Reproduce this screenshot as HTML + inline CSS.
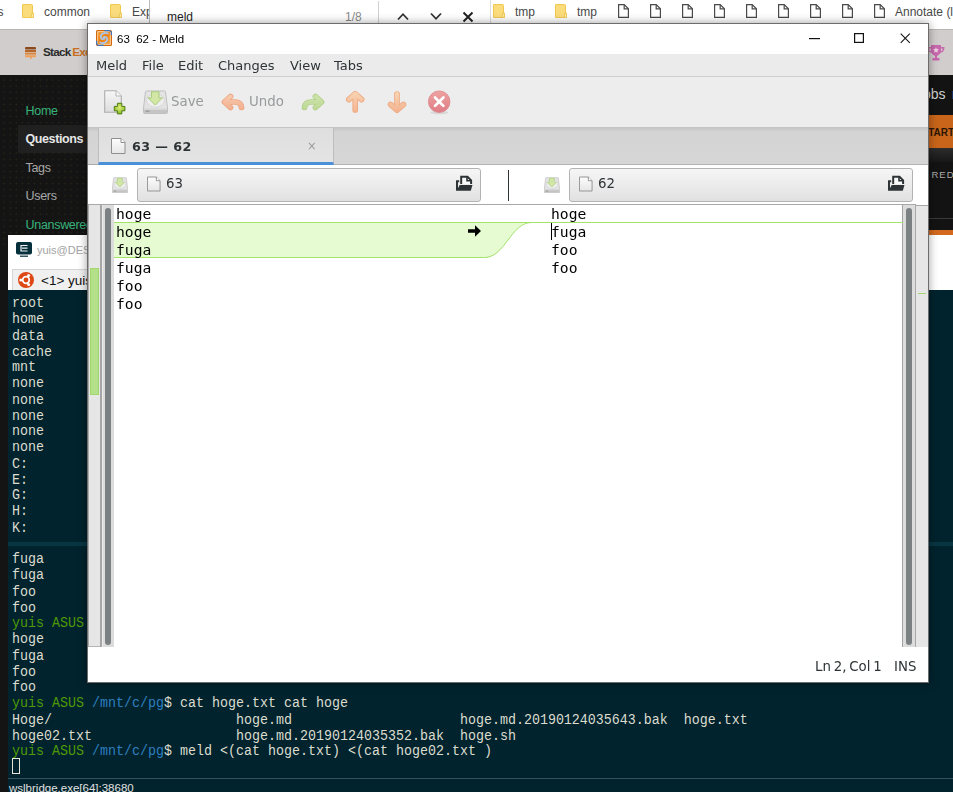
<!DOCTYPE html>
<html><head><meta charset="utf-8"><title>63 62 - Meld</title>
<style>
*{box-sizing:border-box;margin:0;padding:0}
html,body{width:953px;height:792px;overflow:hidden;background:#141414}
body{position:relative;font-family:"Liberation Sans",sans-serif}
.abs{position:absolute}
/* ---------- browser background ---------- */
#bm{left:0;top:0;width:953px;height:30px;background:#fff;border-bottom:1px solid #b9b6b5}
#bm span{position:absolute;top:5px;font:12px/14px "Liberation Sans",sans-serif;color:#484848;white-space:nowrap}
#sehead{left:0;top:30px;width:953px;height:45px;background:#d1cdcc}
#find{left:149px;top:0;width:342px;height:26px;background:#fff;border-left:1px solid #bbb;border-right:1px solid #ddd}
#side{left:0;top:75px;width:100px;height:170px;background:#141414 radial-gradient(circle,#2c2819 0,#2c2819 .6px,transparent 1px) 1px 2px/6.100px 6.100px}
#side div{position:absolute;left:25.500px;font:12.500px/16px "Liberation Sans",sans-serif;white-space:nowrap;letter-spacing:-.3px}
#rside{left:920px;top:75px;width:33px;height:220px;background:#131313}
/* ---------- terminal ---------- */
#term{left:8px;top:235px;width:945px;height:557px;background:#00232d}
#term pre{position:absolute;left:4px;top:61px;font:13.33px/14.25px "Liberation Mono","DejaVu Sans Mono",monospace;color:#dcdccf;white-space:pre;transform:scaleY(1.122807);transform-origin:0 0}
#term .g{color:#4e9a06}
#term .b{color:#2f7fc0}
/* ---------- meld ---------- */
#meld{left:87px;top:23px;width:842px;height:660px;background:#fff;box-shadow:0 0 9px rgba(0,0,0,.38);font-family:"DejaVu Sans","Liberation Sans",sans-serif}
#meld .t{position:absolute;white-space:nowrap}
#meld .mn{top:35px;font:13px/16px "DejaVu Sans",sans-serif;color:#2e3436}
#meld .tb{top:71px;font:13.33px/16px "DejaVu Sans",sans-serif;color:#979a9b}
#meld .fb{border:1px solid #b3b3b3;border-radius:3px;background:linear-gradient(#f6f6f6,#e1e1e1)}
#meld .code{font:14.67px/18px "DejaVu Sans Mono","Liberation Mono",monospace;color:#000;white-space:pre}
</style></head><body>

<!-- browser -->
<div id="bm" class="abs">
  <span style="left:-2.500px">s</span>
<svg class="abs" style="left:22px;top:4px" width="12" height="14" viewBox="0 0 12 14"><path d="M1 0.5h8.5a1 1 0 0 1 1 1V9h1v4.5H1a0.5 .5 0 0 1-.5-.5V1A.5 .5 0 0 1 1 .5z" fill="#fbdc7c" stroke="#f0c850" stroke-width="1"/><rect x="9.5" y="9.5" width="2" height="4" fill="#fde9a8" stroke="#f0c850" stroke-width=".8"/></svg>
  <span style="left:44px">common</span>
<svg class="abs" style="left:110px;top:4px" width="12" height="14" viewBox="0 0 12 14"><path d="M1 0.5h8.5a1 1 0 0 1 1 1V9h1v4.5H1a0.5 .5 0 0 1-.5-.5V1A.5 .5 0 0 1 1 .5z" fill="#fbdc7c" stroke="#f0c850" stroke-width="1"/><rect x="9.5" y="9.5" width="2" height="4" fill="#fde9a8" stroke="#f0c850" stroke-width=".8"/></svg>
  <span style="left:132px">Exp</span>
<svg class="abs" style="left:493px;top:4px" width="12" height="14" viewBox="0 0 12 14"><path d="M1 0.5h8.5a1 1 0 0 1 1 1V9h1v4.5H1a0.5 .5 0 0 1-.5-.5V1A.5 .5 0 0 1 1 .5z" fill="#fbdc7c" stroke="#f0c850" stroke-width="1"/><rect x="9.5" y="9.5" width="2" height="4" fill="#fde9a8" stroke="#f0c850" stroke-width=".8"/></svg>
  <span style="left:515px">tmp</span>
<svg class="abs" style="left:555px;top:4px" width="12" height="14" viewBox="0 0 12 14"><path d="M1 0.5h8.5a1 1 0 0 1 1 1V9h1v4.5H1a0.5 .5 0 0 1-.5-.5V1A.5 .5 0 0 1 1 .5z" fill="#fbdc7c" stroke="#f0c850" stroke-width="1"/><rect x="9.5" y="9.5" width="2" height="4" fill="#fde9a8" stroke="#f0c850" stroke-width=".8"/></svg>
  <span style="left:577px">tmp</span>
<svg class="abs" style="left:618px;top:4px" width="11" height="14" viewBox="0 0 11 14"><path d="M.6 .6h5.6l4.2 4.2v8.6H.6z" fill="#fff" stroke="#4a4a4a" stroke-width="1.2"/><path d="M6.2 .6v4.2h4.2" fill="none" stroke="#4a4a4a" stroke-width="1.2"/></svg>
<svg class="abs" style="left:650px;top:4px" width="11" height="14" viewBox="0 0 11 14"><path d="M.6 .6h5.6l4.2 4.2v8.6H.6z" fill="#fff" stroke="#4a4a4a" stroke-width="1.2"/><path d="M6.2 .6v4.2h4.2" fill="none" stroke="#4a4a4a" stroke-width="1.2"/></svg>
<svg class="abs" style="left:682px;top:4px" width="11" height="14" viewBox="0 0 11 14"><path d="M.6 .6h5.6l4.2 4.2v8.6H.6z" fill="#fff" stroke="#4a4a4a" stroke-width="1.2"/><path d="M6.2 .6v4.2h4.2" fill="none" stroke="#4a4a4a" stroke-width="1.2"/></svg>
<svg class="abs" style="left:714px;top:4px" width="11" height="14" viewBox="0 0 11 14"><path d="M.6 .6h5.6l4.2 4.2v8.6H.6z" fill="#fff" stroke="#4a4a4a" stroke-width="1.2"/><path d="M6.2 .6v4.2h4.2" fill="none" stroke="#4a4a4a" stroke-width="1.2"/></svg>
<svg class="abs" style="left:746px;top:4px" width="11" height="14" viewBox="0 0 11 14"><path d="M.6 .6h5.6l4.2 4.2v8.6H.6z" fill="#fff" stroke="#4a4a4a" stroke-width="1.2"/><path d="M6.2 .6v4.2h4.2" fill="none" stroke="#4a4a4a" stroke-width="1.2"/></svg>
<svg class="abs" style="left:778px;top:4px" width="11" height="14" viewBox="0 0 11 14"><path d="M.6 .6h5.6l4.2 4.2v8.6H.6z" fill="#fff" stroke="#4a4a4a" stroke-width="1.2"/><path d="M6.2 .6v4.2h4.2" fill="none" stroke="#4a4a4a" stroke-width="1.2"/></svg>
<svg class="abs" style="left:810px;top:4px" width="11" height="14" viewBox="0 0 11 14"><path d="M.6 .6h5.6l4.2 4.2v8.6H.6z" fill="#fff" stroke="#4a4a4a" stroke-width="1.2"/><path d="M6.2 .6v4.2h4.2" fill="none" stroke="#4a4a4a" stroke-width="1.2"/></svg>
<svg class="abs" style="left:842px;top:4px" width="11" height="14" viewBox="0 0 11 14"><path d="M.6 .6h5.6l4.2 4.2v8.6H.6z" fill="#fff" stroke="#4a4a4a" stroke-width="1.2"/><path d="M6.2 .6v4.2h4.2" fill="none" stroke="#4a4a4a" stroke-width="1.2"/></svg>
<svg class="abs" style="left:874px;top:4px" width="11" height="14" viewBox="0 0 11 14"><path d="M.6 .6h5.6l4.2 4.2v8.6H.6z" fill="#fff" stroke="#4a4a4a" stroke-width="1.2"/><path d="M6.2 .6v4.2h4.2" fill="none" stroke="#4a4a4a" stroke-width="1.2"/></svg>
  <span style="left:895px">Annotate (l</span>
</div>
<div id="sehead" class="abs">
  <svg class="abs" style="left:25px;top:17px" width="11" height="13" viewBox="0 0 12 13" preserveAspectRatio="none"><rect x="0" y="0" width="12" height="2.4" rx="1" fill="#8a4a1c"/><rect x="0" y="3" width="12" height="2" fill="#b8662a"/><rect x="0" y="5.6" width="12" height="2" fill="#d9863e"/><path d="M0 8.2h12v1a1 1 0 0 1-1 1H8l-2.4 2.6V10.2H1a1 1 0 0 1-1-1z" fill="#ee9f58"/></svg>
  <span class="abs" style="left:43px;top:14px;font:bold 11.700px/16px 'Liberation Sans',sans-serif;color:#2b2b2b;letter-spacing:-.75px;white-space:nowrap">Stack<span style="color:#c96f22;margin-left:1.700px">Exchange</span></span>
  <svg class="abs" style="left:927px;top:15px" width="18" height="16" viewBox="0 0 18 16"><path d="M4 0h10v2h3.5c0 3.5-1.5 5.5-4.2 6C12.500 9.500 11.200 10.400 10 10.800V13h2.500v2.500h-7V13H8v-2.200C6.800 10.400 5.500 9.500 4.700 8C2 7.500.5 5.500.5 2H4zM2.200 3.500c.2 1.600.9 2.600 1.900 3C3.900 5.500 3.900 4.500 4 3.500zM15.800 3.500H14c.1 1 .1 2-.1 3 1-.4 1.700-1.400 1.900-3z" fill="#c868ad"/><path d="M9 2.200l.9 1.800 2 .3-1.450 1.400.35 2L9 6.800 7.200 7.700l.35-2L6.100 4.300l2-.3z" fill="#ecd0e4"/></svg>
</div>
<div id="find" class="abs">
  <span class="abs" style="left:17px;top:10px;font:12px/14px 'Liberation Sans',sans-serif;color:#222">meld</span>
  <span class="abs" style="left:195px;top:10px;font:12px/14px 'Liberation Sans',sans-serif;color:#8a8a8a">1/8</span>
  <div class="abs" style="left:228px;top:1px;width:1px;height:23px;background:#d0d0d0"></div>
  <svg class="abs" style="left:247px;top:12px" width="12" height="9" viewBox="0 0 12 9"><path d="M1 7.500L6 2.200l5 5.300" fill="none" stroke="#333" stroke-width="1.800"/></svg>
  <svg class="abs" style="left:280px;top:12px" width="12" height="9" viewBox="0 0 12 9"><path d="M1 1.500L6 6.800l5-5.300" fill="none" stroke="#333" stroke-width="1.800"/></svg>
  <svg class="abs" style="left:312px;top:11px" width="12" height="12" viewBox="0 0 12 12"><path d="M1.500 1.500l9 9M10.500 1.500l-9 9" fill="none" stroke="#222" stroke-width="2"/></svg>
</div>
<div id="side" class="abs">
  <div class="abs" style="left:18px;top:50px;width:82px;height:28px;background:#202020"></div>
  <div style="top:28px;color:#37b37a">Home</div>
  <div style="top:56px;color:#e6e6e6;font-weight:bold;letter-spacing:-.4px">Questions</div>
  <div style="top:85px;color:#a8a8a8">Tags</div>
  <div style="top:113px;color:#a8a8a8">Users</div>
  <div style="top:142px;color:#37b37a">Unanswered</div>
</div>
<div id="rside" class="abs">
  <span class="abs" style="left:3px;top:10.500px;font:14px/16px 'Liberation Sans',sans-serif;color:#cfcfcf;word-spacing:2.500px;white-space:nowrap">obs r</span>
  <div class="abs" style="left:0;top:40px;width:33px;height:33px;background:#c8651b"></div>
  <span class="abs" style="left:1.500px;top:50.500px;font:bold 10px/14px 'Liberation Sans',sans-serif;color:#2a1505;white-space:nowrap">START</span>
  <div class="abs" style="left:0;top:73px;width:33px;height:14px;background:linear-gradient(#2c2c2c,#171717)"></div>
  <span class="abs" style="left:11.500px;top:94px;font:9.500px/12px 'Liberation Sans',sans-serif;color:#ababab;letter-spacing:1px;white-space:nowrap">RED</span>
  <div class="abs" style="left:0;top:143px;width:33px;height:1px;background:#3a3a3a"></div>
  <div class="abs" style="left:0;top:155px;width:33px;height:5px;background:#d2691e"></div>
  <div class="abs" style="left:0;top:160px;width:33px;height:55px;background:#fff"></div>
</div>

<!-- terminal -->
<div id="term" class="abs">
  <div class="abs" style="left:0;top:0;width:945px;height:34px;background:#fff"></div>
  <svg class="abs" style="left:8px;top:7px" width="16" height="15" viewBox="0 0 16 15"><rect x="0" y="0" width="16" height="12.500" rx="2" fill="#06303c"/><path d="M11.500 3.500H5v5.500h6.500M6 6.200h5.500" fill="none" stroke="#f2f2f2" stroke-width="1.200"/><rect x="4" y="13.600" width="8" height="1.200" fill="#06303c"/></svg>
  <span class="abs" style="left:29px;top:8px;font:11px/14px 'Liberation Sans',sans-serif;color:#a3a3a3;white-space:nowrap">yuis@DESKTOP</span>
  <div class="abs" style="left:0;top:34px;width:945px;height:21px;background:#fff"></div>
  <div class="abs" style="left:4px;top:34px;width:200px;height:21px;background:#f0f0f0;border:1px solid #d5d5d5;border-bottom:0"></div>
  <svg class="abs" style="left:10px;top:37px" width="16" height="16" viewBox="0 0 16 16"><circle cx="8" cy="8" r="8" fill="#dd4814"/><circle cx="8" cy="8" r="3.300" fill="none" stroke="#fff" stroke-width="1.700"/><circle cx="2.800" cy="8" r="1.500" fill="#fff"/><circle cx="10.600" cy="3.500" r="1.500" fill="#fff"/><circle cx="10.600" cy="12.500" r="1.500" fill="#fff"/></svg>
  <span class="abs" style="left:33px;top:38px;font:13.500px/16px 'Liberation Sans',sans-serif;color:#111;white-space:nowrap">&lt;1&gt; yuis</span>
  <div class="abs" style="left:0;top:307px;width:945px;height:4px;background:#073642"></div>
<pre>root
home
data
cache
mnt
none
none
none
none
none
C:
E:
G:
H:
K:

fuga
fuga
foo
foo
<span class="g">yuis ASUS</span> <span class="b">/mnt/c/pg</span>$ 
hoge
fuga
foo
foo
<span class="g">yuis ASUS</span> <span class="b">/mnt/c/pg</span>$ cat hoge.txt cat hoge
Hoge/                       hoge.md                     hoge.md.20190124035643.bak  hoge.txt
hoge02.txt                  hoge.md.20190124035352.bak  hoge.sh
<span class="g">yuis ASUS</span> <span class="b">/mnt/c/pg</span>$ meld &lt;(cat hoge.txt) &lt;(cat hoge02.txt )</pre>
  <div class="abs" style="left:4px;top:523px;width:8px;height:16px;border:1px solid #e6e6dc"></div>
  <div class="abs" style="left:0;top:543px;width:945px;height:1px;background:#35525a"></div>
  <span class="abs" style="left:1px;top:545.500px;font:11.500px/14px 'Liberation Sans',sans-serif;color:#e0e0e0;white-space:nowrap">wslbridge.exe[64]:38680</span>
</div>

<!-- meld -->
<div id="meld" class="abs"><div class="abs" style="left:1px;top:0;width:841px;height:660px;will-change:transform">
  <!-- title bar -->
  <div class="abs" style="left:-1px;top:0;width:842px;height:31px;background:#fff"></div>
  <svg class="abs" style="left:8px;top:7px" width="16" height="16" viewBox="0 0 16 16"><defs><linearGradient id="mg" x1="0" y1="0" x2="1" y2="1"><stop offset="0" stop-color="#f6a341"/><stop offset=".5" stop-color="#ee8112"/><stop offset="1" stop-color="#f7a84c"/></linearGradient></defs><rect x=".6" y=".6" width="14.800" height="14.800" rx="1" fill="url(#mg)" stroke="#d4660a" stroke-width="1.200"/><rect x="1.700" y="1.700" width="12.600" height="12.600" fill="none" stroke="#fbe0bd" stroke-width=".8"/><path d="M8.300 .6H13a2.400 2.400 0 0 1 2.400 2.400V5.300" fill="none" stroke="#3f74bd" stroke-width="1.200"/><path d="M7.700 15.400H3A2.400 2.400 0 0 1 .6 13V10.700" fill="none" stroke="#3f74bd" stroke-width="1.200"/><path d="M11.800 3.600C8.500 1.900 4.300 3.800 4.800 7.300 5.200 9.900 8.600 9.800 8.800 7.700" fill="none" stroke="#a9c8ee" stroke-width="1.700" stroke-linecap="round"/><path d="M4.200 12.400C7.500 14.100 11.700 12.200 11.200 8.700 10.800 6.100 7.400 6.200 7.200 8.300" fill="none" stroke="#a9c8ee" stroke-width="1.700" stroke-linecap="round"/></svg>
  <span class="t" style="left:29px;top:9px;font:11.500px/15px 'Liberation Sans',sans-serif;color:#000;letter-spacing:0">63&nbsp; 62 - Meld</span>
  <svg class="abs" style="left:721px;top:15px" width="11" height="2" viewBox="0 0 11 2"><rect width="11" height="1.200" fill="#111"/></svg>
  <svg class="abs" style="left:766px;top:10px" width="10" height="10" viewBox="0 0 10 10"><rect x=".6" y=".6" width="8.800" height="8.800" fill="none" stroke="#111" stroke-width="1.200"/></svg>
  <svg class="abs" style="left:812px;top:10px" width="10.500" height="10.500" viewBox="0 0 12 12"><path d="M.8 .8l10.400 10.400M11.200 .8L.8 11.200" stroke="#111" stroke-width="1.200"/></svg>
  <!-- menu bar -->
  <div class="abs" style="left:-1px;top:31px;width:842px;height:22px;background:#ebebeb"></div>
  <span class="t mn" style="left:8px">Meld</span><span class="t mn" style="left:54px">File</span><span class="t mn" style="left:90px">Edit</span><span class="t mn" style="left:130px">Changes</span><span class="t mn" style="left:202px">View</span><span class="t mn" style="left:246px">Tabs</span>
  <div class="abs" style="left:-1px;top:53px;width:842px;height:1px;background:#cfcfcf"></div>
  <!-- toolbar -->
  <div class="abs" style="left:-1px;top:54px;width:842px;height:50px;background:#ededed"></div>
  <svg class="abs" style="left:16px;top:67px" width="23" height="26" viewBox="0 0 23 26"><defs><linearGradient id="nd" x1="0" y1="0" x2="0" y2="1"><stop offset="0" stop-color="#f7f7f7"/><stop offset="1" stop-color="#dcdcdc"/></linearGradient><radialGradient id="pg" cx=".5" cy=".4" r=".6"><stop offset="0" stop-color="#dcec78"/><stop offset="1" stop-color="#8dbb2c"/></radialGradient></defs><path d="M.7 .7h11.300l5.300 5.300v16.300H.7z" fill="url(#nd)" stroke="#adadad" stroke-width="1.100"/><path d="M12 .7v5.300h5.300" fill="#fafafa" stroke="#b5b5b5"/><path d="M13.400 13.300h4.400v3.100h3.100v4.400h-3.100v3.100h-4.400v-3.100h-3.100v-4.400h3.100z" fill="url(#pg)" stroke="#4d7d0c" stroke-width="1" stroke-linejoin="round"/></svg>
  <svg class="abs" style="left:55px;top:67px" width="25" height="24" viewBox="0 0 25 25" preserveAspectRatio="none"><path d="M3.500 1h18a1 1 0 0 1 1 .8L24.500 19v4.500a1 1 0 0 1-1 1h-22a1 1 0 0 1-1-1V19L2.500 1.800a1 1 0 0 1 1-.8z" fill="#e3e3e3" stroke="#bdbdbd"/><ellipse cx="12.500" cy="11" rx="9" ry="7" fill="#ededed" stroke="#d6d6d6"/><path d="M1 19.500h23v4a.6 .6 0 0 1-.6 .6H1.600a.6 .6 0 0 1-.6-.6z" fill="#c4c4c4"/><rect x="1" y="19.500" width="23" height="1.200" fill="#dadada"/><rect x="2.500" y="21.300" width="4" height="1.500" fill="#9c9c9c"/><path d="M8.500 1.800h7.500v6.300h3.500L12.250 15.700 5 8.100h3.500z" fill="#d2e6a6" stroke="#a9cd7c" stroke-linejoin="round"/></svg>
  <span class="t tb" style="left:83px">Save</span>
  <svg class="abs" style="left:132px;top:68px" width="26" height="22" viewBox="0 0 26 22"><defs><linearGradient id="gu" x1="0" y1="0" x2="0" y2="22" gradientUnits="userSpaceOnUse"><stop offset="0" stop-color="#f8d2b4"/><stop offset="1" stop-color="#f2a98a"/></linearGradient></defs><path d="M10.500 5.500L4.500 11l6 5.500 M5 11H15Q21 11 21.500 16.500" fill="none" stroke="#eda582" stroke-width="5.700" stroke-linecap="round" stroke-linejoin="round"/><path d="M10.500 5.500L4.500 11l6 5.500 M5 11H15Q21 11 21.500 16.500" fill="none" stroke="url(#gu)" stroke-width="4" stroke-linecap="round" stroke-linejoin="round"/></svg>
  <span class="t tb" style="left:161px">Undo</span>
  <svg class="abs" style="left:212px;top:68px" width="26" height="22" viewBox="0 0 26 22"><defs><linearGradient id="gr" x1="0" y1="0" x2="0" y2="22" gradientUnits="userSpaceOnUse"><stop offset="0" stop-color="#d3e6b3"/><stop offset="1" stop-color="#b9d78f"/></linearGradient></defs><path d="M15.500 5.500L21.500 11l-6 5.500 M21 11H11Q5 11 4.500 16.500" fill="none" stroke="#b1d088" stroke-width="5.700" stroke-linecap="round" stroke-linejoin="round"/><path d="M15.500 5.500L21.500 11l-6 5.500 M21 11H11Q5 11 4.500 16.500" fill="none" stroke="url(#gr)" stroke-width="4" stroke-linecap="round" stroke-linejoin="round"/></svg>
  <svg class="abs" style="left:256px;top:68px" width="22" height="26" viewBox="0 0 22 26"><defs><linearGradient id="ga" x1="0" y1="0" x2="0" y2="26" gradientUnits="userSpaceOnUse"><stop offset="0" stop-color="#f9d6b4"/><stop offset="1" stop-color="#f2ab88"/></linearGradient></defs><path d="M11.200 5V19 M4.800 8.500L11.200 2.800l6.400 5.700" fill="none" stroke="#eeaa84" stroke-width="5.700" stroke-linecap="round" stroke-linejoin="round"/><path d="M11.200 5V19 M4.800 8.500L11.200 2.800l6.400 5.700" fill="none" stroke="url(#ga)" stroke-width="4" stroke-linecap="round" stroke-linejoin="round"/></svg>
  <svg class="abs" style="left:298px;top:68px" width="22" height="26" viewBox="0 0 22 26"><defs><linearGradient id="gd" x1="0" y1="0" x2="0" y2="26" gradientUnits="userSpaceOnUse"><stop offset="0" stop-color="#f9d6b4"/><stop offset="1" stop-color="#f2ab88"/></linearGradient></defs><path d="M11 3V17 M4.600 13.500L11 19.200l6.400-5.700" fill="none" stroke="#eeaa84" stroke-width="5.700" stroke-linecap="round" stroke-linejoin="round"/><path d="M11 3V17 M4.600 13.500L11 19.200l6.400-5.700" fill="none" stroke="url(#gd)" stroke-width="4" stroke-linecap="round" stroke-linejoin="round"/></svg>
  <svg class="abs" style="left:339px;top:66px" width="25" height="26" viewBox="0 0 25 26"><defs><linearGradient id="gs" x1="0" y1="0" x2="0" y2="1"><stop offset="0" stop-color="#eda3a0"/><stop offset="1" stop-color="#df7c86"/></linearGradient></defs><ellipse cx="12.300" cy="23.500" rx="9" ry="1.800" fill="#d8d8d8"/><circle cx="12.200" cy="12.700" r="10.800" fill="url(#gs)" stroke="#dc8a8e" stroke-width=".8"/><path d="M8 8.500l8.400 8.400M16.400 8.500L8 16.900" stroke="#fff" stroke-width="2.700" stroke-linecap="round"/></svg>
  <div class="abs" style="left:-1px;top:104px;width:842px;height:1px;background:#c4c4c4"></div>
  <!-- tab bar -->
  <div class="abs" style="left:-1px;top:105px;width:842px;height:37px;background:linear-gradient(#c6c6c6,#d4d4d4 4px,#d6d6d6);border-bottom:1px solid #b4b4b4"></div>
  <div class="abs" style="left:10px;top:105px;width:236px;height:37px;background:linear-gradient(#dedede,#e4e4e4);border-left:1px solid #bdbdbd;border-right:1px solid #bdbdbd;border-bottom:3px solid #4a90d9"></div>
  <svg class="abs" style="left:23px;top:115px" width="15" height="16" viewBox="0 0 15 16"><defs><linearGradient id="dg23115" x1="0" y1="0" x2="0" y2="1"><stop offset="0" stop-color="#fdfdfd"/><stop offset="1" stop-color="#e6e6e6"/></linearGradient></defs><path d="M.5 .5h9.500l4 4v11H.5z" fill="url(#dg23115)" stroke="#8f8f8f"/><path d="M10 .5v4h4" fill="#fff" stroke="#8f8f8f"/></svg>
  <span class="t" style="left:44px;top:116px;font:bold 12.700px/16px 'DejaVu Sans',sans-serif;color:#2e3436;letter-spacing:.4px">63 — 62</span>
  <span class="t" style="left:219px;top:115px;font:11.500px/16px 'DejaVu Sans',sans-serif;color:#9a9a9a">×</span>
  <div class="abs" style="left:0;top:141px;width:10px;height:1px;background:#aaa"></div>
  <!-- file row -->
  <div class="abs" style="left:-1px;top:142px;width:842px;height:39px;background:#fff"></div>
  <svg class="abs" style="left:24px;top:154px" width="16" height="16" viewBox="0 0 25 25"><path d="M3.500 1h18a1 1 0 0 1 1 .8L24.500 19v4.500a1 1 0 0 1-1 1h-22a1 1 0 0 1-1-1V19L2.500 1.800a1 1 0 0 1 1-.8z" fill="#e3e3e3" stroke="#bdbdbd"/><ellipse cx="12.500" cy="11" rx="9" ry="7" fill="#ededed" stroke="#d6d6d6"/><path d="M1 19.500h23v4a.6 .6 0 0 1-.6 .6H1.600a.6 .6 0 0 1-.6-.6z" fill="#c4c4c4"/><rect x="1" y="19.500" width="23" height="1.200" fill="#dadada"/><rect x="2.500" y="21.300" width="4" height="1.500" fill="#9c9c9c"/><path d="M8.500 1.800h7.500v6.300h3.500L12.250 15.700 5 8.100h3.500z" fill="#d2e6a6" stroke="#a9cd7c" stroke-linejoin="round"/></svg>
  <div class="abs fb" style="left:49px;top:145px;width:344px;height:34px"></div>
  <svg class="abs" style="left:59px;top:153px" width="14" height="16" viewBox="0 0 15 16"><defs><linearGradient id="dg59153" x1="0" y1="0" x2="0" y2="1"><stop offset="0" stop-color="#fdfdfd"/><stop offset="1" stop-color="#e6e6e6"/></linearGradient></defs><path d="M.5 .5h9.500l4 4v11H.5z" fill="url(#dg59153)" stroke="#8f8f8f"/><path d="M10 .5v4h4" fill="#fff" stroke="#8f8f8f"/></svg>
  <span class="t" style="left:78px;top:153px;font:13.33px/16px 'DejaVu Sans',sans-serif;color:#2e3436">63</span>
  <svg class="abs" style="left:368px;top:152px" width="17" height="17" viewBox="0 0 17 17"><path d="M5.200 9V1.800h6.300l3.600 3.600V9" fill="#fafafa" stroke="#2e3436" stroke-width="2" stroke-linejoin="miter"/><path d="M11 1.500v4.300h4.300" fill="none" stroke="#2e3436" stroke-width="1.600"/><path d="M0 5.200h3.200v2H2v6L3.700 10H16.500L14.800 15.800H0z" fill="#2e3436"/></svg>
  <div class="abs" style="left:420px;top:147px;width:1px;height:31px;background:#2e3436"></div>
  <svg class="abs" style="left:456px;top:154px" width="16" height="16" viewBox="0 0 25 25"><path d="M3.500 1h18a1 1 0 0 1 1 .8L24.500 19v4.500a1 1 0 0 1-1 1h-22a1 1 0 0 1-1-1V19L2.500 1.800a1 1 0 0 1 1-.8z" fill="#e3e3e3" stroke="#bdbdbd"/><ellipse cx="12.500" cy="11" rx="9" ry="7" fill="#ededed" stroke="#d6d6d6"/><path d="M1 19.500h23v4a.6 .6 0 0 1-.6 .6H1.600a.6 .6 0 0 1-.6-.6z" fill="#c4c4c4"/><rect x="1" y="19.500" width="23" height="1.200" fill="#dadada"/><rect x="2.500" y="21.300" width="4" height="1.500" fill="#9c9c9c"/><path d="M8.500 1.800h7.500v6.300h3.500L12.250 15.700 5 8.100h3.500z" fill="#d2e6a6" stroke="#a9cd7c" stroke-linejoin="round"/></svg>
  <div class="abs fb" style="left:481px;top:145px;width:344px;height:34px"></div>
  <svg class="abs" style="left:491px;top:153px" width="14" height="16" viewBox="0 0 15 16"><defs><linearGradient id="dg491153" x1="0" y1="0" x2="0" y2="1"><stop offset="0" stop-color="#fdfdfd"/><stop offset="1" stop-color="#e6e6e6"/></linearGradient></defs><path d="M.5 .5h9.500l4 4v11H.5z" fill="url(#dg491153)" stroke="#8f8f8f"/><path d="M10 .5v4h4" fill="#fff" stroke="#8f8f8f"/></svg>
  <span class="t" style="left:510px;top:153px;font:13.33px/16px 'DejaVu Sans',sans-serif;color:#2e3436">62</span>
  <svg class="abs" style="left:800px;top:152px" width="17" height="17" viewBox="0 0 17 17"><path d="M5.200 9V1.800h6.300l3.600 3.600V9" fill="#fafafa" stroke="#2e3436" stroke-width="2" stroke-linejoin="miter"/><path d="M11 1.500v4.300h4.300" fill="none" stroke="#2e3436" stroke-width="1.600"/><path d="M0 5.200h3.200v2H2v6L3.700 10H16.500L14.800 15.800H0z" fill="#2e3436"/></svg>
  <!-- diff area -->
  <div class="abs" style="left:-1px;top:181px;width:842px;height:443px;background:#fff;border-top:1px solid #a8a8a8"></div>
  <div class="abs" style="left:0;top:182px;width:12px;height:442px;background:#e6e6e6;border-left:1px solid #ababab;border-bottom:1px solid #b5b5b5"></div>
  <div class="abs" style="left:12px;top:182px;width:2px;height:442px;background:#a6a6a6"></div>
  <div class="abs" style="left:2px;top:245px;width:9px;height:127px;background:#b5e08a;border:1px solid #a0d86c"></div>
  <div class="abs" style="left:14px;top:182px;width:12px;height:442px;background:#dcdcdc;border-left:1px solid #ebebeb"></div>
  <div class="abs" style="left:17px;top:185px;width:6px;height:437px;background:#7b8083;border-radius:3px"></div>
  <div class="abs" style="left:814px;top:182px;width:14px;height:442px;background:#dcdcdc;border-left:1px solid #a3a3a3;border-right:1px solid #a8a8a8"></div>
  <div class="abs" style="left:818px;top:185px;width:6px;height:437px;background:#7b8083;border-radius:3px"></div>
  <div class="abs" style="left:828px;top:181px;width:12px;height:443px;background:#e6e6e6;border-top:1px solid #fff"></div>
  <div class="abs" style="left:828px;top:182px;width:12px;height:1px;background:#a8a8a8"></div>
  <div class="abs" style="left:830px;top:270px;width:8px;height:1px;background:#a0d86c"></div>
  <svg class="abs" style="left:26px;top:198px" width="790" height="38" viewBox="0 0 790 38"><path d="M0 1H789.500M0 37H370.500C394 37 394 1 417.500 1" fill="none"/><path d="M0 1H417.500C397 1 391 37 370.500 37H0z" fill="#e6fbd2"/><path d="M0 1.500H789M0 36.500H370.500C391 36.500 397 1.500 417.500 1.500" fill="none" stroke="#a4e26a" stroke-width="1"/></svg>
  <svg class="abs" style="left:380px;top:202px" width="13" height="12" viewBox="0 0 13 12"><path d="M0 4.200h7V.3L13 6 7 11.700V7.800H0z" fill="#000"/></svg>
  <pre class="t code" style="left:28px;top:182px">hoge
hoge
fuga
fuga
foo
foo</pre>
  <pre class="t code" style="left:463px;top:182px">hoge
fuga
foo
foo</pre>
  <div class="abs" style="left:463px;top:200px;width:1px;height:17px;background:#000"></div>
  <!-- status -->
  <span class="t" style="left:727px;top:636px;font:13.33px/16px 'DejaVu Sans',sans-serif;color:#2e3436;word-spacing:-1.400px">Ln 2, Col 1</span>
  <span class="t" style="left:806px;top:636px;font:13.33px/16px 'DejaVu Sans',sans-serif;color:#2e3436">INS</span>
  <div class="abs" style="left:-1px;top:0;width:842px;height:660px;border:1px solid #6c6c6c;pointer-events:none"></div>
</div></div>

</body></html>
